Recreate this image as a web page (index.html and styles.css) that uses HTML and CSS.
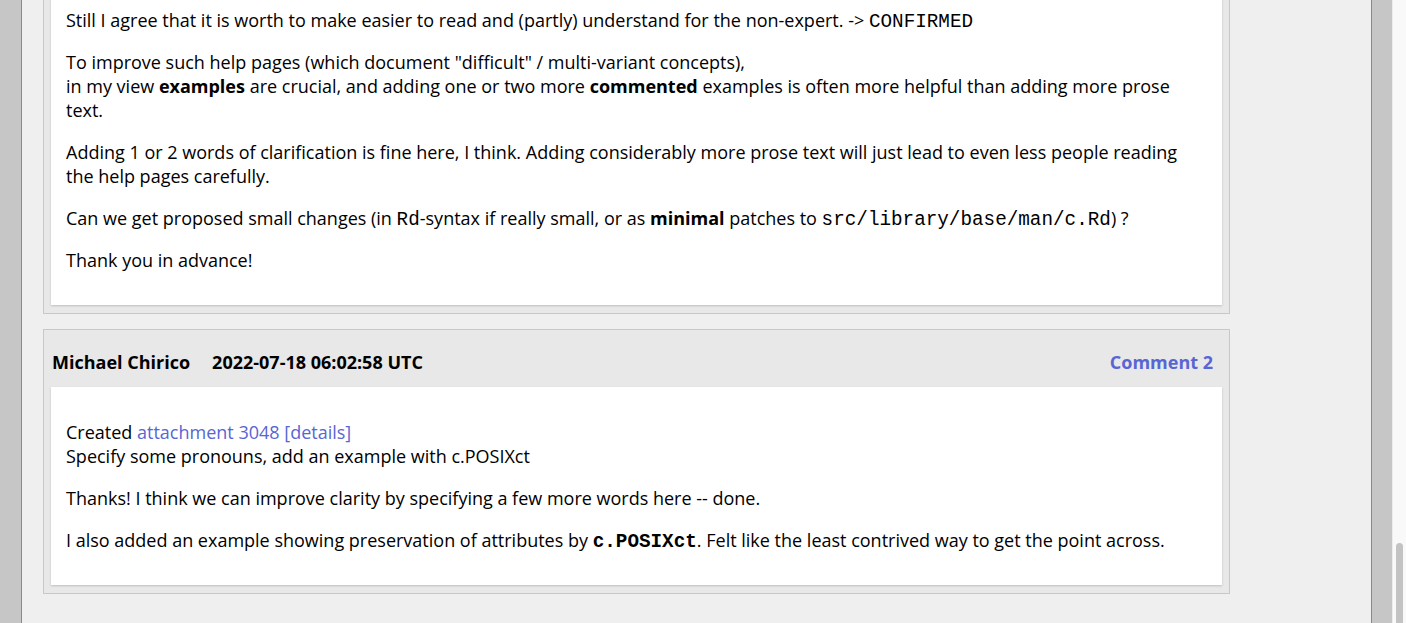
FILE: index.html
```html
<!DOCTYPE html>
<html>
<head>
<meta charset="utf-8">
<link rel="stylesheet" href="styles.css">
</head>
<body>
<div class="frame">
  <div class="side-left"></div>
  <main class="page">
    <div class="thread">
      <section class="comment comment-scrolled">
        <div class="comment-body">
          <p>Still I agree that it is worth to make easier to read and (partly) understand for the non-expert. -&gt; <code>CONFIRMED</code></p>
          <p>To improve such help pages (which document "difficult" / multi-variant concepts),<br>in my view <b>examples</b> are crucial, and adding one or two more <b>commented</b> examples is often more helpful than adding more prose text.</p>
          <p>Adding 1 or 2 words of clarification is fine here, I think. Adding considerably more prose text will just lead to even less people reading the help pages carefully.</p>
          <p>Can we get proposed small changes (in <code>Rd</code>-syntax if really small, or as <b>minimal</b> patches to <code>src/library/base/man/c.Rd</code>) ?</p>
          <p>Thank you in advance!</p>
        </div>
      </section>
      <section class="comment">
        <header class="comment-head">
          <span class="author">Michael Chirico</span>
          <span class="time">2022-07-18 06:02:58 UTC</span>
          <a class="comment-num" href="#c2">Comment 2</a>
        </header>
        <div class="comment-body">
          <p>Created <a class="link" href="#a3048">attachment 3048</a> <a class="link" href="#d3048">[details]</a><br>Specify some pronouns, add an example with c.POSIXct</p>
          <p>Thanks! I think we can improve clarity by specifying a few more words here -- done.</p>
          <p>I also added an example showing preservation of attributes by <code class="strong">c.POSIXct</code>. Felt like the least contrived way to get the point across.</p>
        </div>
      </section>
    </div>
  </main>
  <div class="side-right"></div>
  <div class="scrollbar"><div class="thumb"></div></div>
</div>
</body>
</html>
```

FILE: styles.css
```css
html, body {
  margin: 0;
  padding: 0;
  height: 100%;
  overflow: hidden;
}
body {
  font-family: "Open Sans", "Noto Sans", sans-serif;
  font-size: 18px;
  line-height: 24px;
  color: #000;
}
.frame {
  display: flex;
  height: 623px;
  width: 1406px;
}
.side-left {
  width: 21px;
  flex: none;
  background: #c6c6c6;
  border-right: 1px solid #7d8aa0;
}
.page {
  flex: 1;
  background: #efefef;
  padding-left: 21px;
  overflow: hidden;
}
.side-right {
  width: 20px;
  flex: none;
  background: #c6c6c6;
  border-left: 1px solid #7d8aa0;
}
.scrollbar {
  width: 13px;
  flex: none;
  background: #f9f9f9;
  border-left: 1px solid #ececec;
  display: flex;
  flex-direction: column;
  justify-content: flex-end;
  align-items: center;
}
.thumb {
  width: 7px;
  height: 84px;
  margin-bottom: -4px;
  background: #c3c3c3;
  border-radius: 4px;
}
.thread {
  width: 1187px;
  display: flex;
  flex-direction: column;
  gap: 15px;
}
.comment {
  background: #e8e8e8;
  border: 1px solid #c9c9bf;
  padding: 0 7px 8px 7px;
}
.comment-scrolled {
  margin-top: -26px;
}
.comment-head {
  display: flex;
  align-items: center;
  padding: 20px 9px 13px 1px;
  font-weight: 700;
}
.author {
  margin-right: 22px;
}
.comment-num {
  margin-left: auto;
  color: #5866d4;
  text-decoration: none;
}
.comment-body {
  background: #fff;
  padding: 15px 15px;
  box-shadow: 0 1px 2px rgba(0, 0, 0, 0.18);
}
.comment-body p {
  margin: 18px 0;
}
code {
  font-family: "Liberation Mono", "Courier New", monospace;
  font-size: 19.3px;
  line-height: 0;
}
code.strong {
  font-weight: 700;
}
.link {
  color: #5866d4;
  text-decoration: none;
}
```
